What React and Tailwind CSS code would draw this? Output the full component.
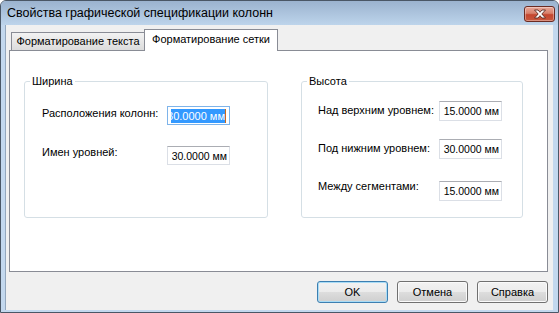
import React from 'react';

const FONT = "font-['Liberation_Sans',Arial,sans-serif]";

export default function App() {
  return (
    <div className={`w-[559px] h-[313px] flex flex-col bg-[#c3d8ee] border border-[#4a5766] rounded-t-[6px] overflow-hidden text-black ${FONT}`}>
      {/* Title bar */}
      <div className="h-[24px] shrink-0 flex items-center justify-between bg-[linear-gradient(#9bb3cf,#bdd4eb)]">
        <span className="pl-[6px] text-[12.5px] leading-[16px]">Свойства графической спецификации колонн</span>
        <CloseButton />
      </div>

      {/* Client area */}
      <div className="flex-1 ml-[4px] mr-[5px] mb-[2px] bg-[#f0f0f0] border-l border-[#93a7bd] flex flex-col pl-[3px]">
        {/* Tabs */}
        <div className="mt-[4px] h-[21px] flex items-end pl-[2px]">
          <div className="w-[134px] h-[18px] border border-b-0 border-[#898c95] bg-[linear-gradient(#f2f2f2,#dcdcdc)] flex items-center justify-center text-[11px]">
            Форматирование текста
          </div>
          <div className="relative z-10 -ml-px -mb-px w-[134px] h-[22px] border border-b-0 border-[#898c95] bg-white flex items-center justify-center text-[11px] pb-[2px]">
            Форматирование сетки
          </div>
        </div>

        {/* Panel */}
        <div className="w-[539px] h-[222px] border border-[#898c95] bg-white flex pt-[30px] pl-[14px] gap-[33px]">
          <Group title="Ширина" width="w-[244px]">
            <div className="flex flex-col pt-[24px] pl-[17px]">
              <Row label="Расположения колонн:" labelW="w-[125px]" value="30.0000 мм" focused inputH="h-[19px]" />
              <Row label="Имен уровней:" labelW="w-[125px]" value="30.0000 мм" inputH="h-[19px]" rowClass="mt-[20px]" inputClass="mt-[1px]" />
            </div>
          </Group>
          <Group title="Высота" width="w-[222px]">
            <div className="flex flex-col pt-[19px] pl-[16px]">
              <Row label="Над верхним уровнем:" labelW="w-[121px]" value="15.0000 мм" labelClass="mt-[2px]" />
              <Row label="Под нижним уровнем:" labelW="w-[121px]" value="30.0000 мм" labelClass="mt-[2px]" rowClass="mt-[18px]" />
              <Row label="Между сегментами:" labelW="w-[121px]" value="15.0000 мм" inputClass="mt-[2px]" rowClass="mt-[20px]" />
            </div>
          </Group>
        </div>

        {/* Buttons */}
        <div className="w-[539px] mt-[9px] flex justify-end gap-[9px]">
          <Button label="OK" primary />
          <Button label="Отмена" />
          <Button label="Справка" />
        </div>
      </div>
    </div>
  );
}

function CloseButton() {
  return (
    <div className="mr-[3px] mt-[1px] w-[31px] h-[16px] rounded-[3px] border border-[#6b2b22] bg-[linear-gradient(#e9a899_0%,#d8806b_45%,#c4462f_55%,#c8583e_100%)] flex items-center justify-center shadow-[inset_0_0_0_1px_rgba(255,255,255,0.35)]">
      <svg width="14" height="10" viewBox="0 0 14 10">
        <path
          d="M1.5 1 H5 L7 3.3 L9 1 H12.5 L8.8 5 L12.5 9 H9 L7 6.7 L5 9 H1.5 L5.2 5 Z"
          fill="#ffffff"
          stroke="#5a2a22"
          strokeWidth="0.9"
          strokeLinejoin="round"
        />
      </svg>
    </div>
  );
}

function Group({ title, width, children }) {
  return (
    <div className={`relative ${width} h-[137px] border border-[#d5dfe5] rounded-[3px]`}>
      <span className="absolute left-[5px] -top-[8px] bg-white px-[2px] text-[11px] leading-[14px]">{title}</span>
      {children}
    </div>
  );
}

function Row({ label, labelW, value, focused, inputH = 'h-[20px]', labelClass = '', inputClass = '', rowClass = '' }) {
  return (
    <div className={`flex items-start ${rowClass}`}>
      <span className={`${labelW} text-[11px] leading-[14px] whitespace-nowrap ${labelClass}`}>{label}</span>
      {focused ? (
        <div className={`w-[63px] ${inputH} bg-white border border-[#7eb4ea] flex items-center justify-end pr-[3px] ${inputClass}`}>
          <div className="w-[54px] h-[14px] overflow-hidden flex justify-end bg-[#3399ff]">
            <span className="text-[11px] leading-[14px] text-white whitespace-nowrap">{value}</span>
          </div>
          <div className="w-px h-[14px] bg-[#c86a1e]" />
        </div>
      ) : (
        <div className={`w-[63px] ${inputH} bg-white border border-[#dbdfe6] border-t-[#abadb3] flex items-center justify-end pr-[2px] overflow-hidden ${inputClass}`}>
          <span className="text-[10.5px] leading-[14px] whitespace-nowrap">{value}</span>
        </div>
      )}
    </div>
  );
}

function Button({ label, primary }) {
  return (
    <div
      className={`w-[71px] h-[22px] rounded-[3px] border flex items-center justify-center text-[11px] bg-[linear-gradient(#f2f2f2_0%,#ebebeb_50%,#dddddd_50%,#cfcfcf_100%)] ${
        primary
          ? 'border-[#3c7fb1] shadow-[inset_0_0_0_1px_#a9dcf6]'
          : 'border-[#707070] shadow-[inset_0_0_0_1px_#fafafa]'
      }`}
    >
      {label}
    </div>
  );
}
